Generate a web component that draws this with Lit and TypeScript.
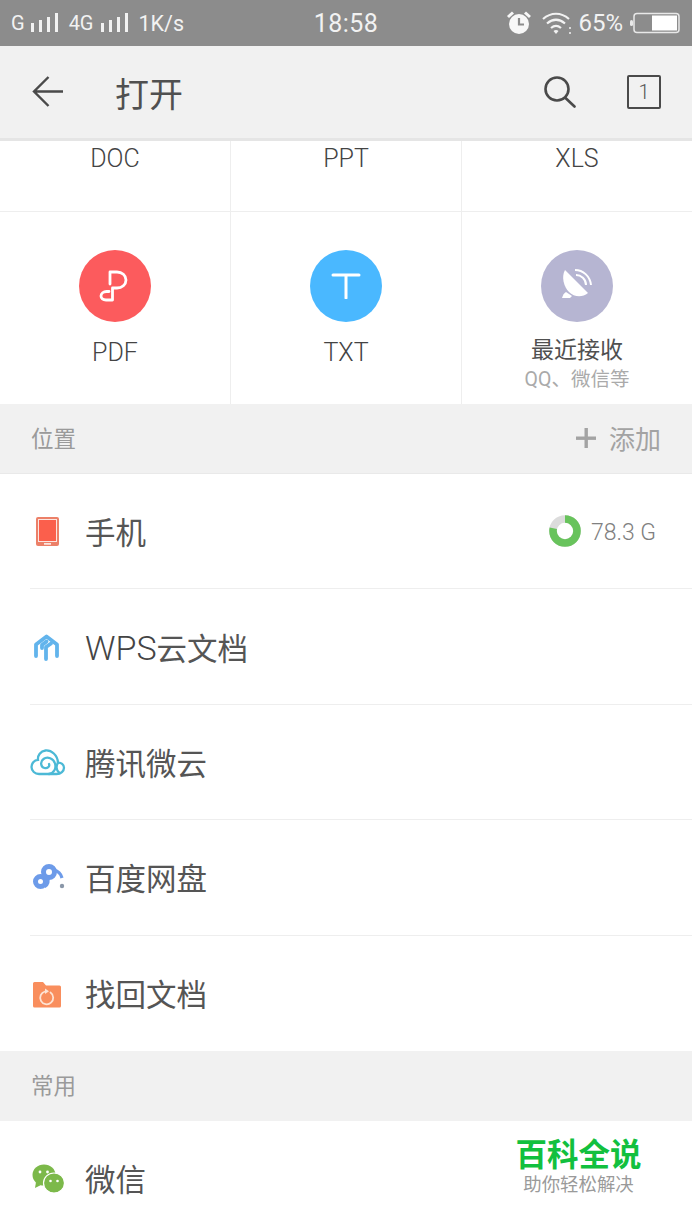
import { LitElement, html, css, svg } from "lit";
import { customElement } from "lit/decorators.js";

const rows = [
  { name: html`手机`, icon: svg`<rect x="1" y="1" width="23" height="29" rx="2" fill="#ec8068"/><rect x="3" y="3" width="19" height="23" fill="#fbe6e0"/><rect x="4" y="4" width="17" height="21" fill="#fb5f4c"/><rect x="9" y="27.2" width="7" height="1.4" fill="#fff"/>` },
  { name: html`<span class="lat">WPS</span>云文档`, icon: svg`<g fill="none" stroke="#62b4ec" stroke-width="3.8" stroke-linecap="round" stroke-linejoin="round"><path d="M3 24V12.500L13.500 4.500 24 12.500V24"/><path d="M9 16V13L13.500 9.500"/><path d="M13 27V15L18 11.500"/></g>` },
  { name: html`腾讯微云`, icon: svg`<g fill="none" stroke="#4cb9d6" stroke-width="2.3" stroke-linecap="round"><path d="M9 27H26.500C31 27 34 24 34 20.800 34 17.500 31 15.300 28 15.600 27.500 8 21.500 3 15.500 3.500 10.500 4 7.500 8.500 8 12.800 4 13 1.500 16.500 1.500 20 1.500 24 5 27 9 27Z"/><path d="M19 27C24 26 26.500 21.500 25 16.500 23.500 11.500 17.500 9 13.500 12 10 14.500 10.500 20 14.500 21 17.500 21.700 20 19.500 19 17"/><path d="M28 15.800C26 18.500 26 23 29 25.500"/></g>` },
  { name: html`百度网盘`, icon: svg`<g fill="none" stroke="#6d9be9" stroke-width="5"><circle cx="7.500" cy="19.500" r="5"/><circle cx="16" cy="10" r="5.500"/><path d="M11 24 C14 22 15 19 13 15"/><path d="M21 8C25 9 28 12 29 16" stroke-width="3.200"/></g><circle cx="29" cy="24" r="2.200" fill="#8a97a8"/>` },
  { name: html`找回文档`, icon: svg`<path d="M1 5.500a1.500 1.500 0 0 1 1.500-1.500H11l3 3.500h13.500A1.500 1.500 0 0 1 29 9v19a1.500 1.500 0 0 1-1.500 1.500h-25A1.500 1.500 0 0 1 1 28Z" fill="#f98e5d"/><path d="M18.500 14.500A6.500 6.500 0 1 1 13 13.500" fill="none" stroke="#fde3d4" stroke-width="1.800" stroke-linecap="round"/><path d="M13 10.500l4 2.800-4 2.700Z" fill="#fde3d4"/>` },
];

@customElement("app-root")
export class AppRoot extends LitElement {
  static styles = css`
    :host { display: block; width: 692px; height: 1230px; overflow: hidden; background: #fff; font-family: Roboto, "Noto Sans CJK SC", sans-serif; color: #555; }
    svg { display: block; flex: none; }
    .status { height: 46px; background: #8c8c8c; color: #f2f2f2; display: grid; grid-template-columns: 1fr auto 1fr; align-items: center; padding: 0 11px; font-size: 21.500px; }
    .left, .right { display: flex; align-items: center; }
    .right { justify-content: flex-end; }
    .g { font-size: 20px; }
    .sig { margin-left: 3px; }
    .sig2 { margin-left: 4px; }
    .g2 { margin-left: 11px; }
    .speed { margin-left: 11px; }
    .time { font-size: 25px; letter-spacing: .4px; }
    .alarm { margin-right: 10px; }
    .pct { font-size: 24px; margin: 0 7px 0 6px; }
    .battery { margin-right: 1px; }
    .bar { height: 92px; background: #f1f1f1; border-bottom: 3px solid #e5e5e5; display: flex; align-items: center; padding: 0 31px 0 32px; }
    .title { font-size: 34px; color: #505050; margin-left: 51px; flex: 1; }
    .count { width: 34px; height: 34px; box-sizing: border-box; border: 2px solid #4a4a4a; border-radius: 2px; font-size: 20px; font-weight: 300; display: flex; align-items: center; justify-content: center; color: #555; margin-left: 51px; }
    .grid { display: grid; grid-template-columns: 231px 231px 230px; }
    .cell { box-sizing: border-box; border-right: 1px solid #eee; display: flex; flex-direction: column; align-items: center; font-weight: 300; }
    .cell:nth-child(3n) { border-right: 0; }
    .top { height: 71px; border-bottom: 1px solid #eee; font-size: 25px; padding-top: 3px; line-height: 30px; color: #444; }
    .big { height: 192px; padding-top: 38px; font-size: 25px; color: #444; }
    .dot { width: 72px; height: 72px; border-radius: 50%; display: flex; align-items: center; justify-content: center; margin-bottom: 16px; }
    .lbl { line-height: 30px; }
    .recent { font-size: 23px; color: #505050; margin-top: -2px; font-weight: 400; }
    .sub { font-size: 19.500px; line-height: 24px; color: #aaa; margin-top: 2px; font-weight: 400; }
    .section { height: 70px; box-sizing: border-box; background: #f1f1f1; border-bottom: 1px solid #e9e9e9; display: flex; align-items: center; justify-content: space-between; padding: 0 31px 4px; font-size: 22.500px; color: #9a9a9a; }
    .section.second { height: 70px; border-bottom: 0; padding-bottom: 3px; }
    .add { display: flex; align-items: center; font-size: 26px; color: #a3a3a3; gap: 13px; padding-top: 2px; }
    .row { height: 115.400px; box-sizing: border-box; margin-left: 30px; border-bottom: 1px solid #eee; display: flex; align-items: center; font-size: 30.500px; color: #555; }
    .row.end { border-bottom: 0; }
    .lat { font-size: 34px; font-weight: 300; color: #444; }
    .ico { width: 36px; margin-right: 19px; display: flex; padding-top: 2px; }
    .s0 { margin-left: 5px; }
    .s1 { margin-left: 3px; }
    .s2 { margin-left: 0; }
    .s3 { margin-left: 3px; }
    .s4 { margin-left: 2px; }
    .name { flex: 1; }
    .use { display: flex; align-items: center; font-size: 23px; font-weight: 300; color: #808080; margin-right: 36px; gap: 10px; }
    .size { padding-top: 3px; }
    .wechat { margin-left: 2px; }
    .last { height: 118px; margin-left: 30px; display: flex; align-items: center; font-size: 30.500px; padding-bottom: 4px; box-sizing: border-box; position: relative; }
    .mark { position: absolute; left: 462px; top: 0; width: 173px; height: 79px; background: #fff; display: flex; flex-direction: column; align-items: center; padding-top: 16px; box-sizing: border-box; }
    .mark b { font-size: 31.500px; line-height: 38px; color: #12c03e; font-weight: 700; }
    .mark span { font-size: 18.400px; line-height: 22px; color: #9a9a9a; margin-top: -1px; }
  `;

  private signal(cls: string) {
    return html`<svg class=${cls} width="30" height="22" viewBox="0 0 30 22" fill="#f2f2f2"><rect x="3" y="11" width="3" height="9"/><rect x="11" y="8" width="3" height="12"/><rect x="19" y="5" width="3" height="15"/><rect x="27" y="1" width="3" height="19"/></svg>`;
  }

  render() {
    return html`
      <div class="status">
        <div class="left"><span class="g">G</span>${this.signal("sig")}<span class="g g2">4G</span>${this.signal("sig2")}<span class="speed">1K/s</span></div>
        <div class="time">18:58</div>
        <div class="right">
          <svg class="alarm" width="26" height="26" viewBox="0 0 26 26"><circle cx="13" cy="14" r="10" fill="#f7f7f7"/><path d="M13 8v6.500h5" fill="none" stroke="#8c8c8c" stroke-width="2.200"/><path d="M2 7l5-4.500M24 7l-5-4.500" stroke="#f7f7f7" stroke-width="3" /></svg>
          <svg width="30" height="24" viewBox="0 0 30 24" fill="none" stroke="#f2f2f2" stroke-width="2.200"><path d="M1 8c8-7 18-7 26 0M5 12.500c6-5 12-5 18 0M9 17c3.500-3 6.500-3 10 0"/><path d="M11.500 20l2.500 3 2.500-3c-1.500-1.200-3.500-1.200-5 0Z" fill="#f2f2f2" stroke="none"/><circle cx="28" cy="17" r="1" fill="#f2f2f2" stroke="none"/><circle cx="28" cy="22" r="1" fill="#f2f2f2" stroke="none"/></svg>
          <span class="pct">65%</span>
          <svg class="battery" width="50" height="22" viewBox="0 0 50 22"><rect x="0" y="8" width="3" height="6" rx="1.500" fill="#e8e8e8"/><rect x="4" y="1.500" width="45" height="19" rx="3" fill="none" stroke="#e8e8e8" stroke-width="1.500"/><rect x="22" y="3.500" width="25" height="15" fill="#fff"/></svg>
        </div>
      </div>
      <div class="bar">
        <svg width="32" height="32" viewBox="0 0 32 32" fill="none" stroke="#4a4a4a" stroke-width="2.400"><path d="M31 15.500H2M16.500 1L2 15.500 16.500 30"/></svg>
        <div class="title">打开</div>
        <svg width="32" height="32" viewBox="0 0 32 32" fill="none" stroke="#4a4a4a" stroke-width="2.600"><circle cx="13" cy="13" r="11.500"/><path d="M21.500 22l9 8.500" stroke-linecap="round"/></svg>
        <div class="count">1</div>
      </div>
      <div class="grid">
        <div class="cell top">DOC</div><div class="cell top">PPT</div><div class="cell top">XLS</div>
        <div class="cell big">
          <div class="dot" style="background:#fc5b5d">
            <svg width="32" height="38" viewBox="0 0 32 38" fill="none" stroke="#fff" stroke-width="2.800" stroke-linejoin="round" stroke-linecap="round"><path d="M11 17V5h7c5 0 9 3.500 9 8s-4 8-9 8h-4.500v12H7c-3 0-5-1.500-5-4s2.500-4.500 5.500-4.500H10"/></svg>
          </div><div class="lbl">PDF</div>
        </div>
        <div class="cell big">
          <div class="dot" style="background:#4ab8ff">
            <svg width="30" height="26" viewBox="0 0 30 26" fill="none" stroke="#fff" stroke-width="3" stroke-linecap="round"><path d="M2 2h26M15 2v23"/></svg>
          </div><div class="lbl">TXT</div>
        </div>
        <div class="cell big">
          <div class="dot" style="background:#b6b5d2">
            <svg width="34" height="34" viewBox="0 0 34 34" fill="#fff"><path d="M5 1l23 23c-6 5-14 4-19-1S1 8 5 1Z"/><path d="M6 23l6 4-2 2H2c1-3 2-5 4-6Z"/><g fill="none" stroke="#fff" stroke-width="2"><path d="M15 1c8 0 15 6 16 15"/><path d="M16 6c5 0 10 4 10 10"/></g></svg>
          </div>
          <div class="lbl recent">最近接收</div><div class="sub">QQ、微信等</div>
        </div>
      </div>
      <div class="section"><span>位置</span><span class="add"><svg width="20" height="20" viewBox="0 0 20 20" fill="#a3a3a3"><rect x="8.500" y="0" width="3.400" height="20"/><rect x="0" y="8.500" width="20" height="3.400"/></svg>添加</span></div>
      ${rows.map((r, i) => {
        const w = i === 0 || i === 4 ? 30 : 36;
        return html`
        <div class="row ${i === 4 ? "end" : ""}">
          <span class="ico"><svg class="s${i}" width="${w}" height="32" viewBox="0 0 ${w} 32">${r.icon}</svg></span>
          <span class="name">${r.name}</span>
          ${i === 0 ? html`<span class="use"><svg width="32" height="32" viewBox="0 0 32 32" fill="none" stroke-width="7.600"><circle cx="16" cy="16" r="12" stroke="#dcdcdc"/><circle cx="16" cy="16" r="12" stroke="#68c35c" stroke-dasharray="59 76" transform="rotate(-90 16 16)"/></svg><span class="size">78.3 G</span></span>` : ""}
        </div>`;
      })}
      <div class="section second"><span>常用</span></div>
      <div class="last">
        <span class="ico"><svg class="wechat" width="34" height="30" viewBox="0 0 34 30"><ellipse cx="12" cy="11" rx="11.500" ry="10.500" fill="#7cb94a"/><path d="M4 18l-1 6 6-3Z" fill="#7cb94a"/><ellipse cx="22" cy="19" rx="10.500" ry="10" fill="#7cb94a" stroke="#fff" stroke-width="1.200"/><circle cx="8" cy="8" r="1.400" fill="#fff"/><circle cx="15.500" cy="8" r="1.400" fill="#fff"/><circle cx="18.500" cy="17" r="1.300" fill="#fff"/><circle cx="25.500" cy="17" r="1.300" fill="#fff"/></svg></span>
        <span class="name">微信</span>
        <div class="mark"><b>百科全说</b><span>助你轻松解决</span></div>
      </div>
    `;
  }
}
